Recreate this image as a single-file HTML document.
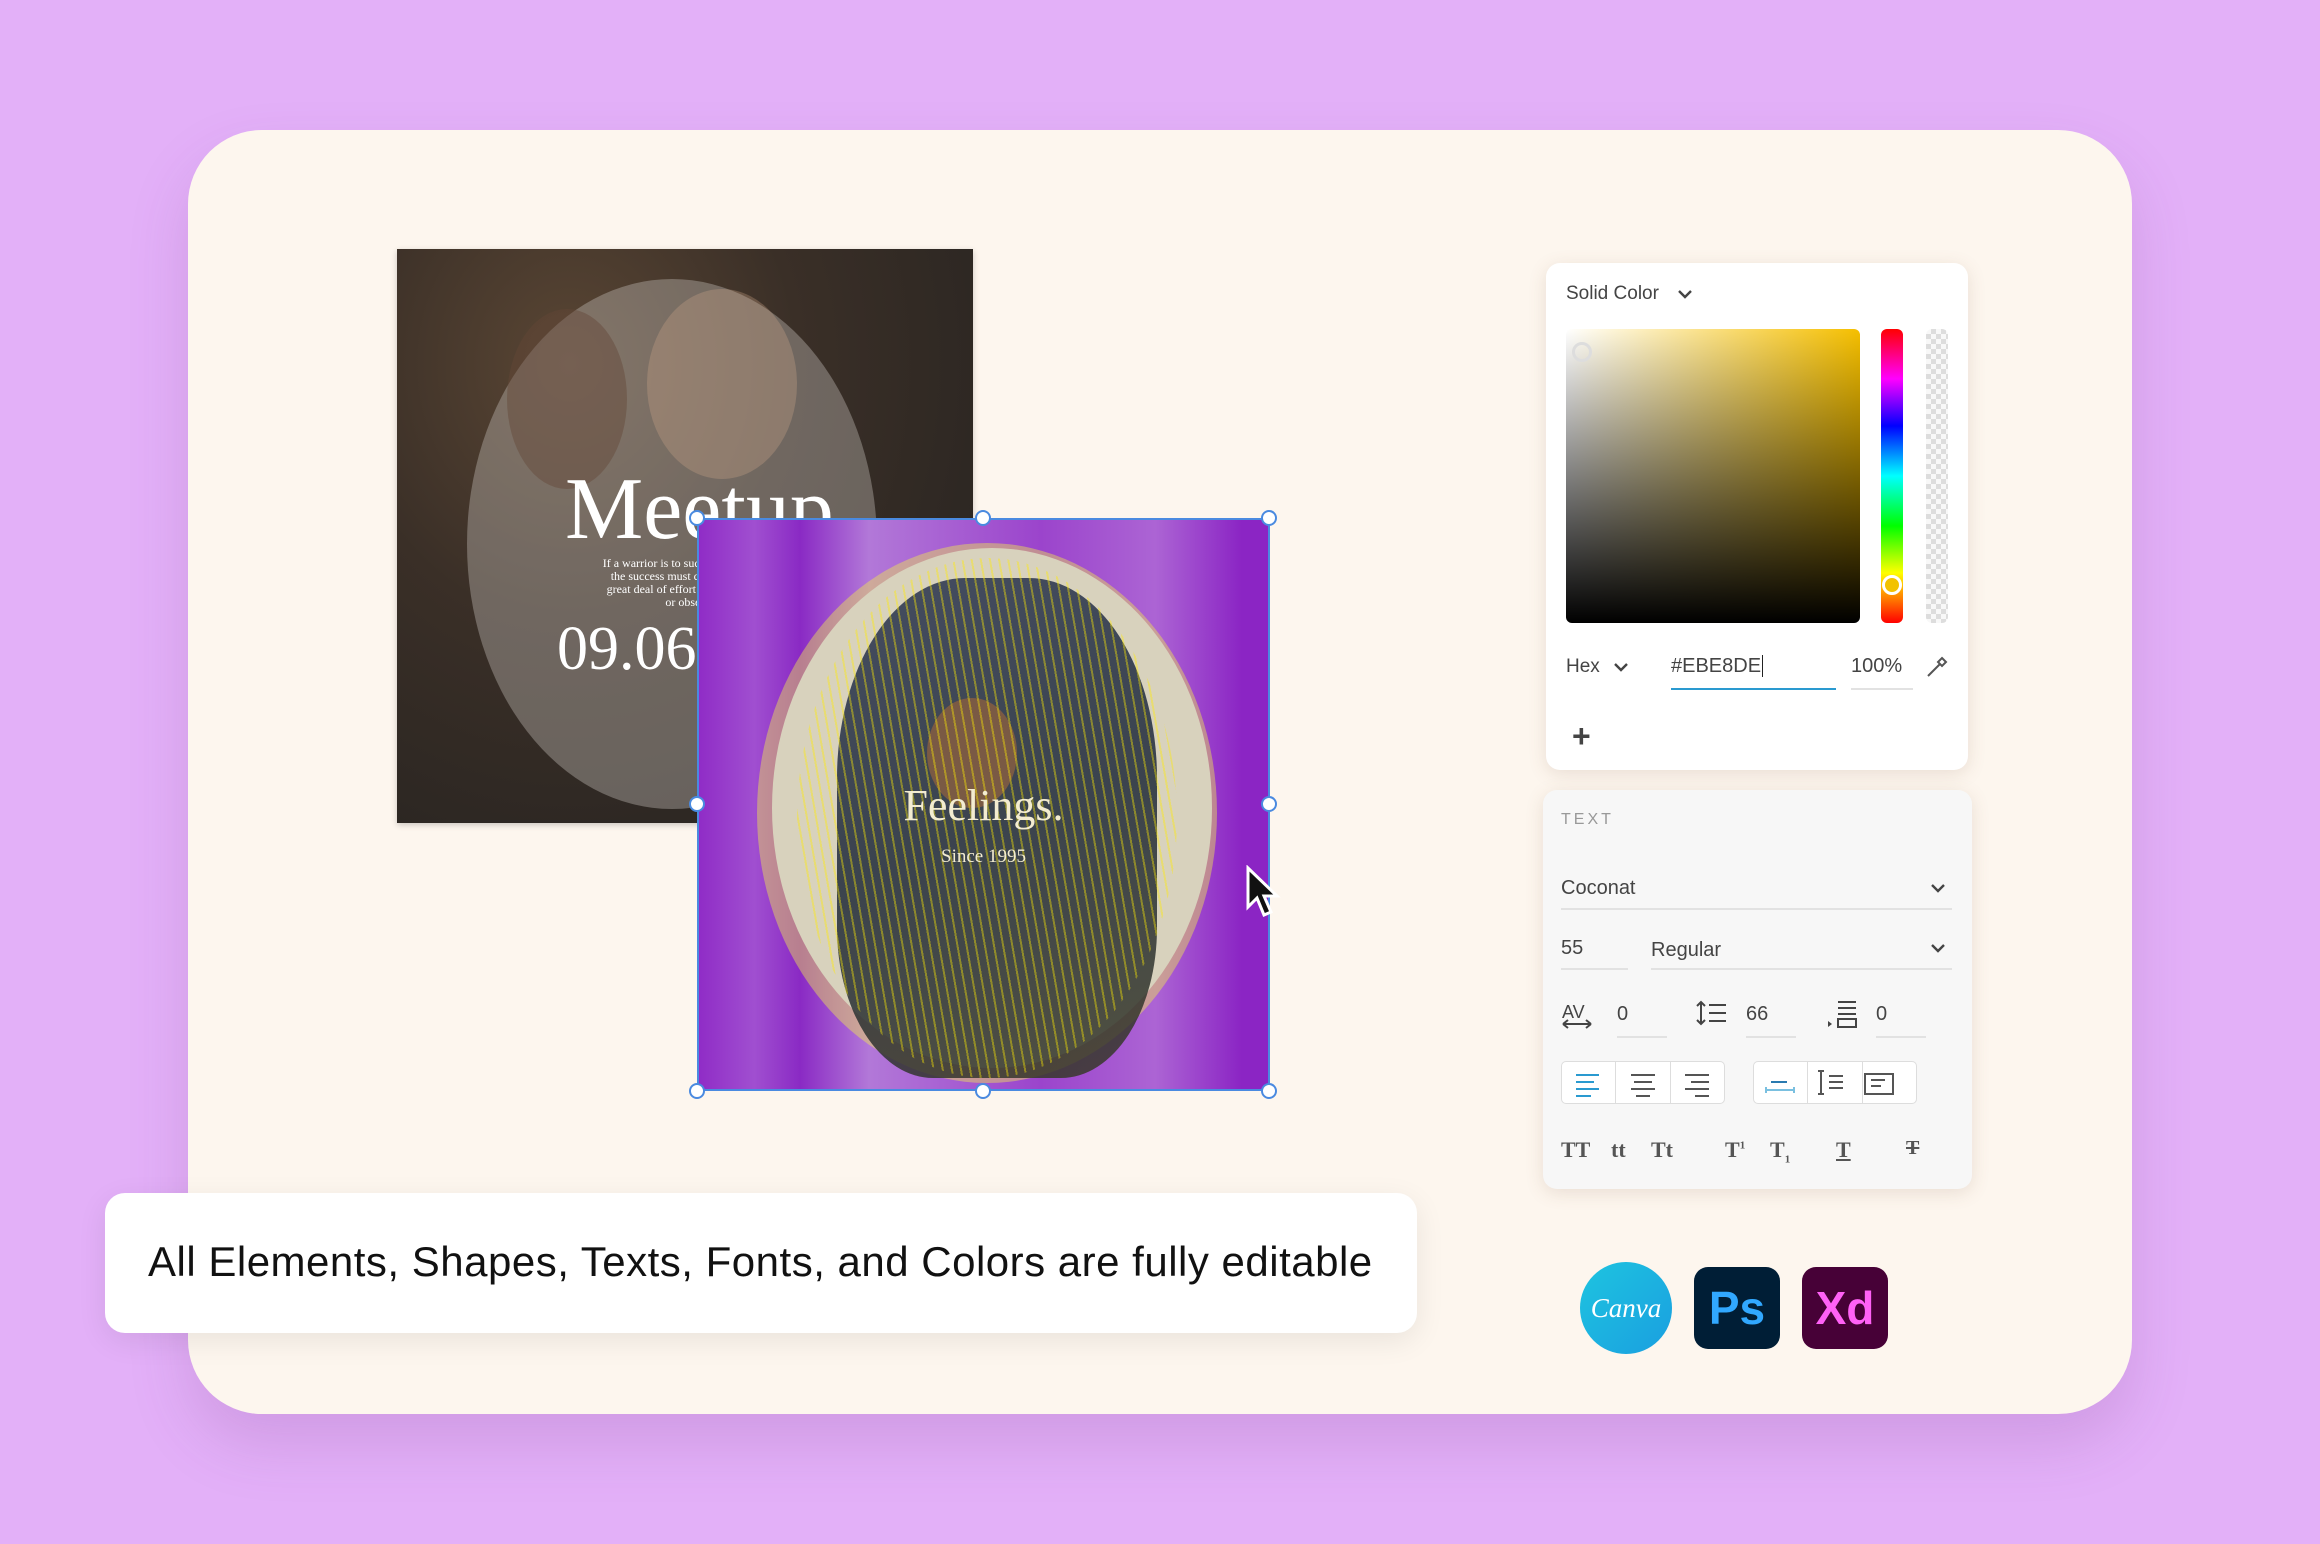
<!DOCTYPE html>
<html><head><meta charset="utf-8"><style>
*{margin:0;padding:0;box-sizing:border-box}
body{width:2320px;height:1544px;background:#e3b0f8;position:relative;overflow:hidden;font-family:"Liberation Sans",sans-serif}
.abs{position:absolute}
.card{left:188px;top:130px;width:1944px;height:1284px;background:#fdf6ee;border-radius:74px;box-shadow:0 30px 60px rgba(120,60,140,.18)}
.meet{left:397px;top:249px;width:576px;height:574px;background:radial-gradient(ellipse at 30% 20%,#5a4634,#3a2f27 40%,#2b2622 80%);overflow:hidden;box-shadow:0 2px 6px rgba(0,0,0,.2)}
.purp{left:697px;top:518px;width:573px;height:573px;background:linear-gradient(90deg,#8f2bc6 0%,#a04fd0 10%,#8a2ac4 18%,#b278d8 30%,#9b44cc 60%,#ac64d4 80%,#8b25c4 95%);overflow:hidden}
.sel{left:697px;top:518px;width:573px;height:573px;border:2px solid #4a8ae0}
.h{width:16px;height:16px;border-radius:50%;background:#fff;border:2px solid #4a8ae0;position:absolute}
.panel{background:#fff;border-radius:14px;box-shadow:0 4px 18px rgba(120,90,60,.15)}
.t{color:#444;font-size:20px}
.ul{position:absolute;height:2px;background:#e2e2e2}
</style></head><body>
<div class="abs card"></div>

<div class="abs meet">
 <div class="abs" style="left:70px;top:30px;width:410px;height:530px;border-radius:50%;background:rgba(200,195,190,.38)"></div>
 <div class="abs" style="left:250px;top:40px;width:150px;height:190px;border-radius:50%;background:rgba(210,170,140,.3)"></div>
 <div class="abs" style="left:110px;top:60px;width:120px;height:180px;border-radius:50%;background:rgba(100,70,55,.45)"></div>
 <div class="abs" style="left:168px;top:210px;color:#fff;font-family:'Liberation Serif',serif;font-size:88px">Meetup</div>
 <div class="abs" style="left:188px;top:308px;color:#fff;font-family:'Liberation Serif',serif;font-size:12px;line-height:13px;text-align:right;width:120px">If a warrior is to succ<br>the success must co<br>great deal of effort b<br>or obses</div>
 <div class="abs" style="left:160px;top:365px;color:#fff;font-family:'Liberation Serif',serif;font-size:62px">09.06.</div>
</div>

<div class="abs purp">
 <div class="abs" style="left:60px;top:25px;width:460px;height:540px;border-radius:50%;background:rgba(240,230,80,.45)"></div>
 <div class="abs" style="left:75px;top:30px;width:440px;height:520px;border-radius:50%;background:#d8d2bd"></div>
 <div class="abs" style="left:140px;top:60px;width:320px;height:500px;border-radius:40% 40% 30% 30%;background:linear-gradient(160deg,#2a3550,#1f2a3a 50%,#3a3a28);opacity:.85"></div>
 <div class="abs" style="left:230px;top:180px;width:90px;height:110px;border-radius:50%;background:#7a5a44"></div>
 <div class="abs" style="left:100px;top:40px;width:380px;height:520px;border-radius:50%;background:repeating-linear-gradient(80deg,rgba(255,235,0,.4) 0 2px,transparent 2px 9px)"></div>
 <div class="abs" style="left:0;top:262px;width:573px;text-align:center;color:#f3ecd0;font-family:'Liberation Serif',serif;font-size:44px">Feelings.</div>
 <div class="abs" style="left:0;top:328px;width:573px;text-align:center;color:#f3ecd0;font-family:'Liberation Serif',serif;font-size:19px">Since 1995</div>
</div>
<div class="abs sel"></div>
<div class="h" style="left:689px;top:510px"></div><div class="h" style="left:975px;top:510px"></div><div class="h" style="left:1261px;top:510px"></div>
<div class="h" style="left:689px;top:796px"></div><div class="h" style="left:1261px;top:796px"></div>
<div class="h" style="left:689px;top:1083px"></div><div class="h" style="left:975px;top:1083px"></div><div class="h" style="left:1261px;top:1083px"></div>
<svg class="abs" style="left:1245px;top:865px" width="40" height="56" viewBox="0 0 40 56"><path d="M3 3 L3 42 L12 33 L19 50 L26 47 L19 31 L32 31 Z" fill="#111" stroke="#fff" stroke-width="3"/></svg>

<div class="abs" style="left:105px;top:1193px;width:1312px;height:140px;background:#fff;border-radius:20px;box-shadow:0 8px 30px rgba(0,0,0,.08)"></div>
<div class="abs" style="left:148px;top:1238px;font-size:42px;color:#111;letter-spacing:.5px">All Elements, Shapes, Texts, Fonts, and Colors are fully editable</div>

<!-- color panel -->
<div class="abs panel" style="left:1546px;top:263px;width:422px;height:507px"></div>
<div class="abs t" style="left:1566px;top:283px;font-size:19px">Solid Color</div>
<svg class="abs" style="left:1677px;top:288px" width="16" height="12"><path d="M2 3 L8 9 L14 3" stroke="#444" stroke-width="2.4" fill="none"/></svg>
<div class="abs" style="left:1566px;top:329px;width:294px;height:294px;border-radius:6px;background:linear-gradient(to bottom,rgba(0,0,0,0),#000),linear-gradient(to right,#fff,#f5bf00)"></div>
<div class="abs" style="left:1572px;top:342px;width:20px;height:20px;border-radius:50%;border:3px solid #ddd"></div>
<div class="abs" style="left:1881px;top:329px;width:22px;height:294px;border-radius:6px;background:linear-gradient(#f00,#f0f 17%,#00f 33%,#0ff 50%,#0f0 67%,#ff0 83%,#f00)"></div>
<div class="abs" style="left:1882px;top:575px;width:20px;height:20px;border-radius:50%;border:3px solid #fff;background:#f2c200"></div>
<div class="abs" style="left:1926px;top:329px;width:22px;height:294px;border-radius:6px;background:repeating-conic-gradient(#ddd 0 25%,#f8f8f8 0 50%) 0 0/10px 10px"></div>
<div class="abs t" style="left:1566px;top:656px;font-size:19px">Hex</div>
<svg class="abs" style="left:1613px;top:661px" width="16" height="12"><path d="M2 3 L8 9 L14 3" stroke="#444" stroke-width="2.4" fill="none"/></svg>
<div class="abs t" style="left:1671px;top:655px">#EBE8DE<span style="border-left:1.5px solid #222;margin-left:1px"></span></div>
<div class="abs" style="left:1671px;top:688px;width:165px;height:2px;background:#2a9ad0"></div>
<div class="abs t" style="left:1851px;top:655px">100%</div>
<div class="ul" style="left:1851px;top:688px;width:62px"></div>
<svg class="abs" style="left:1924px;top:654px" width="26" height="26"><path d="M4 22 L16 10 M18 4 L22 8 L18 12 L14 8 Z M6 20 L14 12" stroke="#555" stroke-width="2" fill="none"/></svg>
<div class="abs" style="left:1572px;top:724px;font-size:32px;color:#444;font-weight:bold;line-height:24px">+</div>

<!-- text panel -->
<div class="abs panel" style="left:1543px;top:790px;width:429px;height:399px;background:#f7f7f7"></div>
<div class="abs" style="left:1561px;top:811px;font-size:16px;color:#999;letter-spacing:3px">TEXT</div>
<div class="abs t" style="left:1561px;top:877px">Coconat</div>
<svg class="abs" style="left:1930px;top:882px" width="16" height="12"><path d="M2 3 L8 9 L14 3" stroke="#444" stroke-width="2.4" fill="none"/></svg>
<div class="ul" style="left:1561px;top:908px;width:391px"></div>
<div class="abs t" style="left:1561px;top:937px">55</div>
<div class="ul" style="left:1561px;top:968px;width:67px"></div>
<div class="abs t" style="left:1651px;top:939px">Regular</div>
<svg class="abs" style="left:1930px;top:942px" width="16" height="12"><path d="M2 3 L8 9 L14 3" stroke="#444" stroke-width="2.4" fill="none"/></svg>
<div class="ul" style="left:1651px;top:968px;width:301px"></div>
<div class="abs" style="left:1562px;top:1002px;font-size:18px;color:#444">AV</div>
<svg class="abs" style="left:1561px;top:1018px" width="32" height="12"><path d="M2 6 H30 M2 6 L7 2 M2 6 L7 10 M30 6 L25 2 M30 6 L25 10" stroke="#444" stroke-width="2" fill="none"/></svg>
<div class="abs t" style="left:1617px;top:1003px">0</div><div class="ul" style="left:1617px;top:1036px;width:50px"></div>
<svg class="abs" style="left:1696px;top:1000px" width="32" height="26"><path d="M5 2 V24 M1 6 L5 2 L9 6 M1 20 L5 24 L9 20 M13 5 H30 M13 13 H30 M13 21 H30" stroke="#444" stroke-width="2" fill="none"/></svg>
<div class="abs t" style="left:1746px;top:1003px">66</div><div class="ul" style="left:1746px;top:1036px;width:50px"></div>
<svg class="abs" style="left:1826px;top:1000px" width="32" height="30"><path d="M12 2 H30 M12 8 H30 M12 14 H30 M12 19 H30 V27 H12 Z" stroke="#444" stroke-width="2" fill="none"/><path d="M2 21 L6 24 L2 27 Z" fill="#444"/></svg>
<div class="abs t" style="left:1876px;top:1003px">0</div><div class="ul" style="left:1876px;top:1036px;width:50px"></div>
<div class="abs" style="left:1561px;top:1061px;width:164px;height:43px;border:1px solid #ddd;border-radius:5px;background:#fff;display:flex">
 <div style="flex:1;border-right:1px solid #ddd"></div><div style="flex:1;border-right:1px solid #ddd"></div><div style="flex:1"></div></div>
<svg class="abs" style="left:1561px;top:1061px" width="164" height="43"><g stroke-width="2"><path d="M15 14 H38 M15 21 H33 M15 28 H38 M15 35 H30" stroke="#2a9ad0"/><path d="M70 14 H94 M73 21 H91 M70 28 H94 M75 35 H89" stroke="#555"/><path d="M124 14 H148 M130 21 H148 M124 28 H148 M134 35 H148" stroke="#555"/></g></svg>
<div class="abs" style="left:1753px;top:1061px;width:164px;height:43px;border:1px solid #ddd;border-radius:5px;background:#fff;display:flex">
 <div style="flex:1;border-right:1px solid #ddd"></div><div style="flex:1;border-right:1px solid #ddd"></div><div style="flex:1"></div></div>
<svg class="abs" style="left:1753px;top:1061px" width="164" height="43"><g stroke-width="2"><path d="M18 21 H34" stroke="#2a7ab0"/><path d="M13 29 H41 M13 26 V32 M41 26 V32" stroke="#7ac0e0"/><path d="M68 10 V33 M65 10 H71 M65 33 H71 M76 15 H90 M76 21 H90 M76 27 H90" stroke="#555"/><path d="M112 13 H140 V33 H112 Z M118 19 H132 M118 25 H128" stroke="#555" fill="none"/></g></svg>
<div class="abs" style="left:1561px;top:1137px;font-family:'Liberation Serif',serif;font-weight:bold;font-size:22px;color:#555">TT</div>
<div class="abs" style="left:1611px;top:1137px;font-family:'Liberation Serif',serif;font-weight:bold;font-size:22px;color:#555">tt</div>
<div class="abs" style="left:1651px;top:1137px;font-family:'Liberation Serif',serif;font-weight:bold;font-size:22px;color:#555">Tt</div>
<div class="abs" style="left:1725px;top:1137px;font-family:'Liberation Serif',serif;font-weight:bold;font-size:22px;color:#555">T<sup style="font-size:11px">1</sup></div>
<div class="abs" style="left:1770px;top:1137px;font-family:'Liberation Serif',serif;font-weight:bold;font-size:22px;color:#555">T<sub style="font-size:11px">1</sub></div>
<div class="abs" style="left:1836px;top:1137px;font-family:'Liberation Serif',serif;font-weight:bold;font-size:22px;color:#555;text-decoration:underline">T</div>
<div class="abs" style="left:1906px;top:1137px;font-family:'Liberation Serif',serif;font-weight:bold;font-size:20px;color:#555;text-decoration:line-through">T</div>

<!-- app icons -->
<div class="abs" style="left:1580px;top:1262px;width:92px;height:92px;border-radius:50%;background:linear-gradient(135deg,#1ec4e0,#1a9fe0);color:#fff;font-family:'Liberation Serif',serif;font-style:italic;font-size:27px;text-align:center;line-height:92px">Canva</div>
<div class="abs" style="left:1694px;top:1267px;width:86px;height:82px;border-radius:14px;background:#001e36;color:#31a8ff;font-size:46px;font-weight:bold;text-align:center;line-height:82px">Ps</div>
<div class="abs" style="left:1802px;top:1267px;width:86px;height:82px;border-radius:14px;background:#470137;color:#ff61f6;font-size:46px;font-weight:bold;text-align:center;line-height:82px">Xd</div>
</body></html>
